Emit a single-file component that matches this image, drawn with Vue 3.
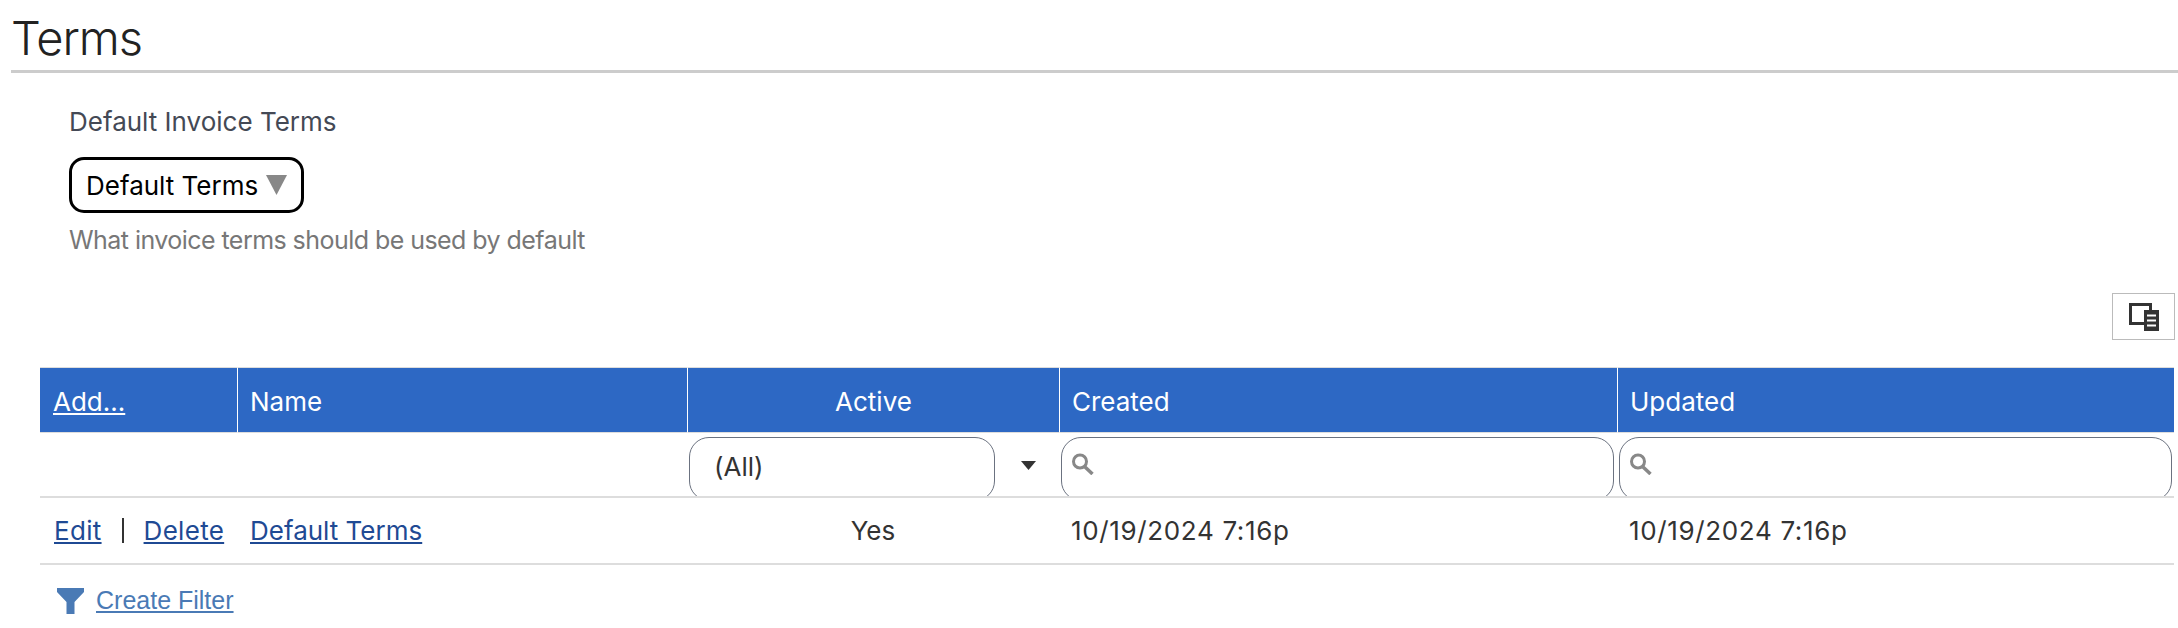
<script setup>
</script>

<template>
  <div class="page">
    <h1 class="title">Terms</h1>
    <section class="setting">
      <div class="label">Default Invoice Terms</div>
      <div class="picker">
        <span>Default Terms</span>
        <svg class="picker-arrow" width="21" height="20" viewBox="0 0 21 20"><path d="M0 0H21L10.5 20Z" fill="#888"/></svg>
      </div>
      <div class="hint">What invoice terms should be used by default</div>
    </section>
    <div class="tools">
      <button class="tool">
        <svg width="30" height="28" viewBox="0 0 30 28">
          <rect x="1.5" y="1.5" width="20" height="19" fill="none" stroke="#333" stroke-width="3"/>
          <rect x="15" y="7" width="15" height="21" fill="#333"/>
          <path d="M18 12.5H27M18 17.5H27M18 22.5H27" stroke="#fff" stroke-width="2"/>
        </svg>
      </button>
    </div>
    <div class="grid">
      <div class="cell head first"><a class="head-link">Add...</a></div>
      <div class="cell head">Name</div>
      <div class="cell head center">Active</div>
      <div class="cell head">Created</div>
      <div class="cell head">Updated</div>

      <div class="fcell"></div>
      <div class="fcell"></div>
      <div class="fcell fselect">
        <div class="box selectbox">(All)</div>
        <svg class="caret" width="15" height="9" viewBox="0 0 15 9"><path d="M0 0H15L7.5 9Z" fill="#333"/></svg>
      </div>
      <div class="fcell">
        <div class="box searchbox narrow">
          <svg width="23" height="22" viewBox="0 0 23 22"><circle cx="9" cy="8.5" r="6.5" fill="none" stroke="#888" stroke-width="3"/><path d="M13.5 13.5L21.5 21" stroke="#888" stroke-width="3.5"/></svg>
        </div>
      </div>
      <div class="fcell">
        <div class="box searchbox">
          <svg width="23" height="22" viewBox="0 0 23 22"><circle cx="9" cy="8.5" r="6.5" fill="none" stroke="#888" stroke-width="3"/><path d="M13.5 13.5L21.5 21" stroke="#888" stroke-width="3.5"/></svg>
        </div>
      </div>

      <div class="cell row actions"><a>Edit</a><i class="sep"></i><a>Delete</a></div>
      <div class="cell row name"><a>Default Terms</a></div>
      <div class="cell row center">Yes</div>
      <div class="cell row date">10/19/2024 7:16p</div>
      <div class="cell row date">10/19/2024 7:16p</div>
    </div>
    <div class="filter">
      <svg width="27" height="26" viewBox="0 0 27 26"><path d="M0 0H27V4L17.5 14V26H9.5V14L0 4Z" fill="#4a7ab5"/></svg>
      <a>Create Filter</a>
    </div>
  </div>
</template>

<style>
html, body { background: #fff; }
</style>

<style scoped>
.page {
  width: 2178px;
  height: 628px;
  overflow: hidden;
  font-family: Inter, "Noto Sans", sans-serif;
  font-size: 26px;
  color: #333;
  box-sizing: border-box;
}
.title {
  margin: 0 0 0 11px;
  height: 70px;
  box-sizing: content-box;
  border-bottom: 3px solid #ccc;
  font-size: 47px;
  font-weight: 300;
  letter-spacing: -1px;
  line-height: 76px;
  color: #222;
}
.setting {
  padding: 33px 0 0 69px;
}
.label { color: #444955; line-height: 32px; }
.picker {
  margin-top: 19px;
  width: 235px;
  height: 56px;
  box-sizing: border-box;
  border: 3px solid #000;
  border-radius: 15px;
  padding-left: 14px;
  display: flex;
  align-items: center;
  gap: 8px;
  color: #000;
}
.hint { margin-top: 11px; color: #777; line-height: 32px; font-size: 25px; letter-spacing: -0.55px; }
.tools {
  display: flex;
  justify-content: flex-end;
  padding: 37px 3px 0 0;
}
.tool {
  width: 63px;
  height: 47px;
  border: 1.5px solid #bbb;
  background: #fff;
  padding: 0;
  display: flex;
  align-items: center;
  justify-content: center;
}
.grid {
  margin: 27px 4px 0 40px;
  display: grid;
  grid-template-columns: 197px 450px 372px 558px 1fr;
  grid-template-rows: 66px 65px 67px;
}
.cell {
  display: flex;
  align-items: center;
  padding-left: 12px;
}
.center { justify-content: center; padding-left: 0; }
.head {
  background: #2d68c4;
  color: #fff;
  font-weight: 400;
  border-left: 1.5px solid #fff;
  border-top: 1px solid #ddd;
  border-bottom: 1px solid #ddd;
  padding-top: 2px;
  box-sizing: border-box;
}
.head.first { border-left: 0; padding-left: 13px; }
.head-link { color: #fff; text-decoration: underline; }
.fcell {
  border-bottom: 2px solid #ddd;
  overflow: hidden;
  position: relative;
  box-sizing: border-box;
}
.fselect { display: flex; }
.box {
  position: relative;
  margin: 4px 2px 0 2px;
  height: 64px;
  box-sizing: border-box;
  border: 1.5px solid #6b7280;
  border-radius: 20px;
}
.narrow { margin-right: 3px; }
.selectbox {
  width: 306px;
  padding: 11px 0 0 24px;
  line-height: 36px;
  margin-left: 2px;
}
.searchbox { padding: 15px 0 0 9px; }
.searchbox svg { display: block; }
.caret { position: absolute; left: 334px; top: 28px; }
.row { border-bottom: 2px solid #ddd; box-sizing: border-box; }
.row a { color: #1f4a94; text-decoration: underline; }
.actions { padding-left: 14px; letter-spacing: 0.3px; }
.name { padding-left: 13px; }
.date { letter-spacing: 0.65px; }
.sep {
  width: 2px;
  height: 25px;
  background: #333;
  margin: 0 20px;
}
.filter {
  display: flex;
  align-items: center;
  gap: 12px;
  padding: 21px 0 0 57px;
}
.filter a {
  font-family: "Liberation Sans", Arial, sans-serif;
  font-size: 25px;
  color: #4a7ab5;
  text-decoration: underline;
}
</style>
